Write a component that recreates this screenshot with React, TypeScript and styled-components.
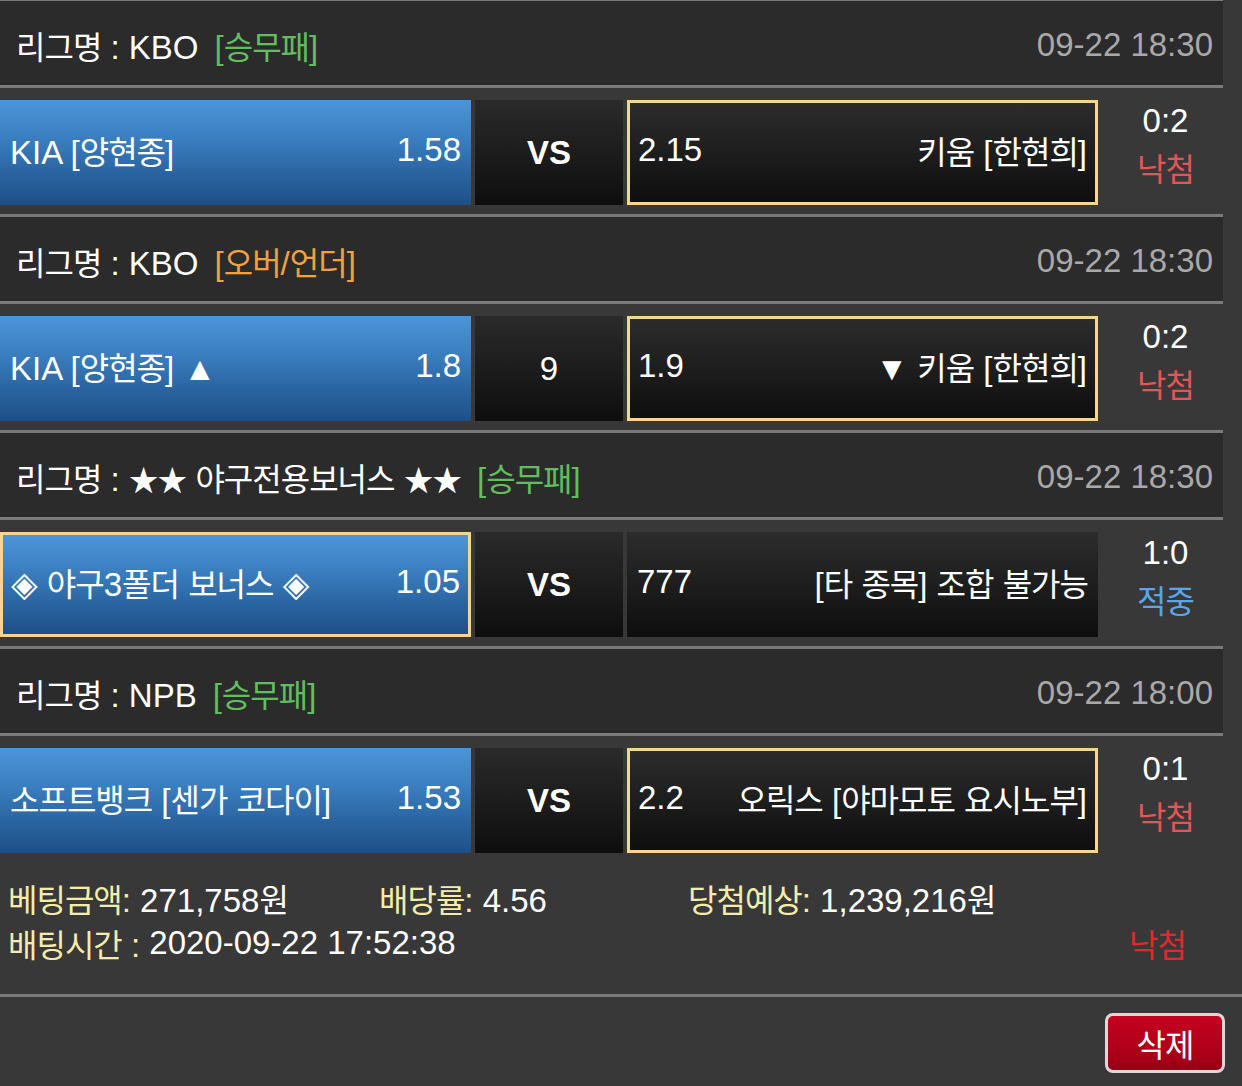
import React from "react";
import styled, { createGlobalStyle } from "styled-components";

const Global = createGlobalStyle`
  html, body { margin: 0; padding: 0; background: #383838; }
  body {
    font-family: "Liberation Sans", Arial, "Noto Sans CJK KR", sans-serif;
    font-size: 33px;
    color: #ffffff;
    overflow: hidden;
  }
`;

const Page = styled.div`
  width: 1242px;
  margin-top: -2px;
`;

const Block = styled.section`
  width: 1223px;
  & + & { margin-top: 9px; }
`;

const Header = styled.div`
  height: 84px;
  box-sizing: content-box;
  background: #2b2b2b;
  border-top: 3px solid #7a7a7a;
  border-bottom: 3px solid #7a7a7a;
  display: flex;
  align-items: center;
  justify-content: space-between;
  padding: 0 10px 0 16px;
  white-space: nowrap;
  & > * { position: relative; top: 2px; }
`;

const League = styled.div`
  display: flex;
  align-items: center;
`;

const Market = styled.span<{ $tone: "green" | "orange" }>`
  margin-left: 16px;
  color: ${(p) => (p.$tone === "green" ? "#62bd5e" : "#f2a13f")};
`;

const DateText = styled.span`
  color: #a9a9a9;
`;

const Row = styled.div`
  margin-top: 12px;
  height: 105px;
  display: grid;
  grid-template-columns: 471px 148px 471px 1fr;
  column-gap: 4px;
`;

const TeamCell = styled.div<{ $home?: boolean; $selected?: boolean }>`
  box-sizing: border-box;
  height: 105px;
  display: flex;
  align-items: center;
  justify-content: space-between;
  padding: ${(p) => (p.$selected ? "0 8px 6px 8px" : "0 10px 6px 10px")};
  border: ${(p) => (p.$selected ? "3px solid #f4d68c" : "none")};
  background: ${(p) =>
    p.$home
      ? "linear-gradient(180deg, #4c95d9 0%, #3b7fc1 35%, #2a64a0 70%, #1e4f86 100%)"
      : "linear-gradient(180deg, #2c2c2c 0%, #1c1c1c 55%, #0e0e0e 100%)"};
  white-space: nowrap;
`;

const VsCell = styled.div<{ $bold?: boolean }>`
  height: 105px;
  display: flex;
  align-items: center;
  justify-content: center;
  padding-top: 1px;
  box-sizing: border-box;
  background: linear-gradient(180deg, #2a2a2a 0%, #1b1b1b 55%, #0e0e0e 100%);
  font-weight: ${(p) => (p.$bold ? 700 : 400)};
`;

const Result = styled.div`
  display: flex;
  flex-direction: column;
  align-items: center;
  line-height: 46px;
  margin-top: -2px;
  padding-left: 6px;
`;

const Status = styled.span<{ $win?: boolean }>`
  color: ${(p) => (p.$win ? "#5aa6e6" : "#e15656")};
`;

const Summary = styled.div`
  width: 1242px;
  box-sizing: border-box;
  padding: 22px 56px 29px 8px;
  border-bottom: 3px solid #7a7a7a;
`;

const SummaryLine = styled.div`
  display: flex;
  align-items: center;
  height: 45px;
  white-space: nowrap;
`;

const SummaryItem = styled.div<{ $w?: number }>`
  width: ${(p) => (p.$w ? `${p.$w}px` : "auto")};
  flex: ${(p) => (p.$w ? "none" : "1")};
`;

const Label = styled.span`
  color: #f3ecaa;
`;

const FinalStatus = styled.span`
  margin-left: auto;
  color: #e02a2a;
`;

const ButtonBar = styled.div`
  width: 1242px;
  box-sizing: border-box;
  display: flex;
  justify-content: flex-end;
  padding: 16px 17px 16px 0;
`;

const DeleteButton = styled.button`
  width: 120px;
  height: 60px;
  box-sizing: border-box;
  border: 3px solid #e4d6d6;
  border-radius: 8px;
  background: linear-gradient(180deg, #c4021f 0%, #b0001a 60%, #980014 100%);
  color: #fff;
  font-family: inherit;
  font-size: 33px;
  padding: 0;
  display: flex;
  align-items: center;
  justify-content: center;
  cursor: pointer;
`;

const Ko = styled.span`
  font-family: "Noto Sans CJK KR", sans-serif;
  font-size: 0.97em;
  letter-spacing: -1px;
`;

const Star = styled.span`
  font-family: "Noto Sans CJK KR", sans-serif;
  font-size: 0.9em;
  letter-spacing: -1px;
`;

const Diamond = styled.span`
  font-family: "DejaVu Sans", sans-serif;
  font-size: 1.05em;
  line-height: 1;
`;

const SPLIT = /([\uAC00-\uD7A3\u3131-\u318E]+|★+|◈)/;

function T({ children }: { children: string }) {
  const parts = children.split(SPLIT);
  return (
    <>
      {parts.map((p, i) => {
        if (i % 2 === 0) return <React.Fragment key={i}>{p}</React.Fragment>;
        if (p === "◈") return <Diamond key={i}>{p}</Diamond>;
        if (p.startsWith("★")) return <Star key={i}>{p}</Star>;
        return <Ko key={i}>{p}</Ko>;
      })}
    </>
  );
}

type Match = {
  league: string;
  market: string;
  tone: "green" | "orange";
  date: string;
  home: string;
  homeOdds: string;
  mid: string;
  midBold: boolean;
  awayOdds: string;
  away: string;
  pick: "home" | "away";
  score: string;
  win: boolean;
};

const matches: Match[] = [
  {
    league: "리그명 : KBO",
    market: "[승무패]",
    tone: "green",
    date: "09-22 18:30",
    home: "KIA [양현종]",
    homeOdds: "1.58",
    mid: "VS",
    midBold: true,
    awayOdds: "2.15",
    away: "키움 [한현희]",
    pick: "away",
    score: "0:2",
    win: false,
  },
  {
    league: "리그명 : KBO",
    market: "[오버/언더]",
    tone: "orange",
    date: "09-22 18:30",
    home: "KIA [양현종] ▲",
    homeOdds: "1.8",
    mid: "9",
    midBold: false,
    awayOdds: "1.9",
    away: "▼ 키움 [한현희]",
    pick: "away",
    score: "0:2",
    win: false,
  },
  {
    league: "리그명 : ★★ 야구전용보너스 ★★",
    market: "[승무패]",
    tone: "green",
    date: "09-22 18:30",
    home: "◈ 야구3폴더 보너스 ◈",
    homeOdds: "1.05",
    mid: "VS",
    midBold: true,
    awayOdds: "777",
    away: "[타 종목] 조합 불가능",
    pick: "home",
    score: "1:0",
    win: true,
  },
  {
    league: "리그명 : NPB",
    market: "[승무패]",
    tone: "green",
    date: "09-22 18:00",
    home: "소프트뱅크 [센가 코다이]",
    homeOdds: "1.53",
    mid: "VS",
    midBold: true,
    awayOdds: "2.2",
    away: "오릭스 [야마모토 요시노부]",
    pick: "away",
    score: "0:1",
    win: false,
  },
];

export default function App() {
  return (
    <Page>
      <Global />
      {matches.map((m, i) => (
        <Block key={i}>
          <Header>
            <League>
              <span>
                <T>{m.league}</T>
              </span>
              <Market $tone={m.tone}>
                <T>{m.market}</T>
              </Market>
            </League>
            <DateText>{m.date}</DateText>
          </Header>
          <Row>
            <TeamCell $home $selected={m.pick === "home"}>
              <span>
                <T>{m.home}</T>
              </span>
              <span>{m.homeOdds}</span>
            </TeamCell>
            <VsCell $bold={m.midBold}>{m.mid}</VsCell>
            <TeamCell $selected={m.pick === "away"}>
              <span>{m.awayOdds}</span>
              <span>
                <T>{m.away}</T>
              </span>
            </TeamCell>
            <Result>
              <span>{m.score}</span>
              <Status $win={m.win}>
                <T>{m.win ? "적중" : "낙첨"}</T>
              </Status>
            </Result>
          </Row>
        </Block>
      ))}
      <Summary>
        <SummaryLine>
          <SummaryItem $w={371}>
            <Label>
              <T>베팅금액:</T>
            </Label>{" "}
            <T>271,758원</T>
          </SummaryItem>
          <SummaryItem $w={309}>
            <Label>
              <T>배당률:</T>
            </Label>{" "}
            4.56
          </SummaryItem>
          <SummaryItem>
            <Label>
              <T>당첨예상:</T>
            </Label>{" "}
            <T>1,239,216원</T>
          </SummaryItem>
        </SummaryLine>
        <SummaryLine>
          <Label>
            <T>배팅시간 :</T>
          </Label>
          &nbsp;2020-09-22 17:52:38
          <FinalStatus>
            <T>낙첨</T>
          </FinalStatus>
        </SummaryLine>
      </Summary>
      <ButtonBar>
        <DeleteButton>
          <T>삭제</T>
        </DeleteButton>
      </ButtonBar>
    </Page>
  );
}
